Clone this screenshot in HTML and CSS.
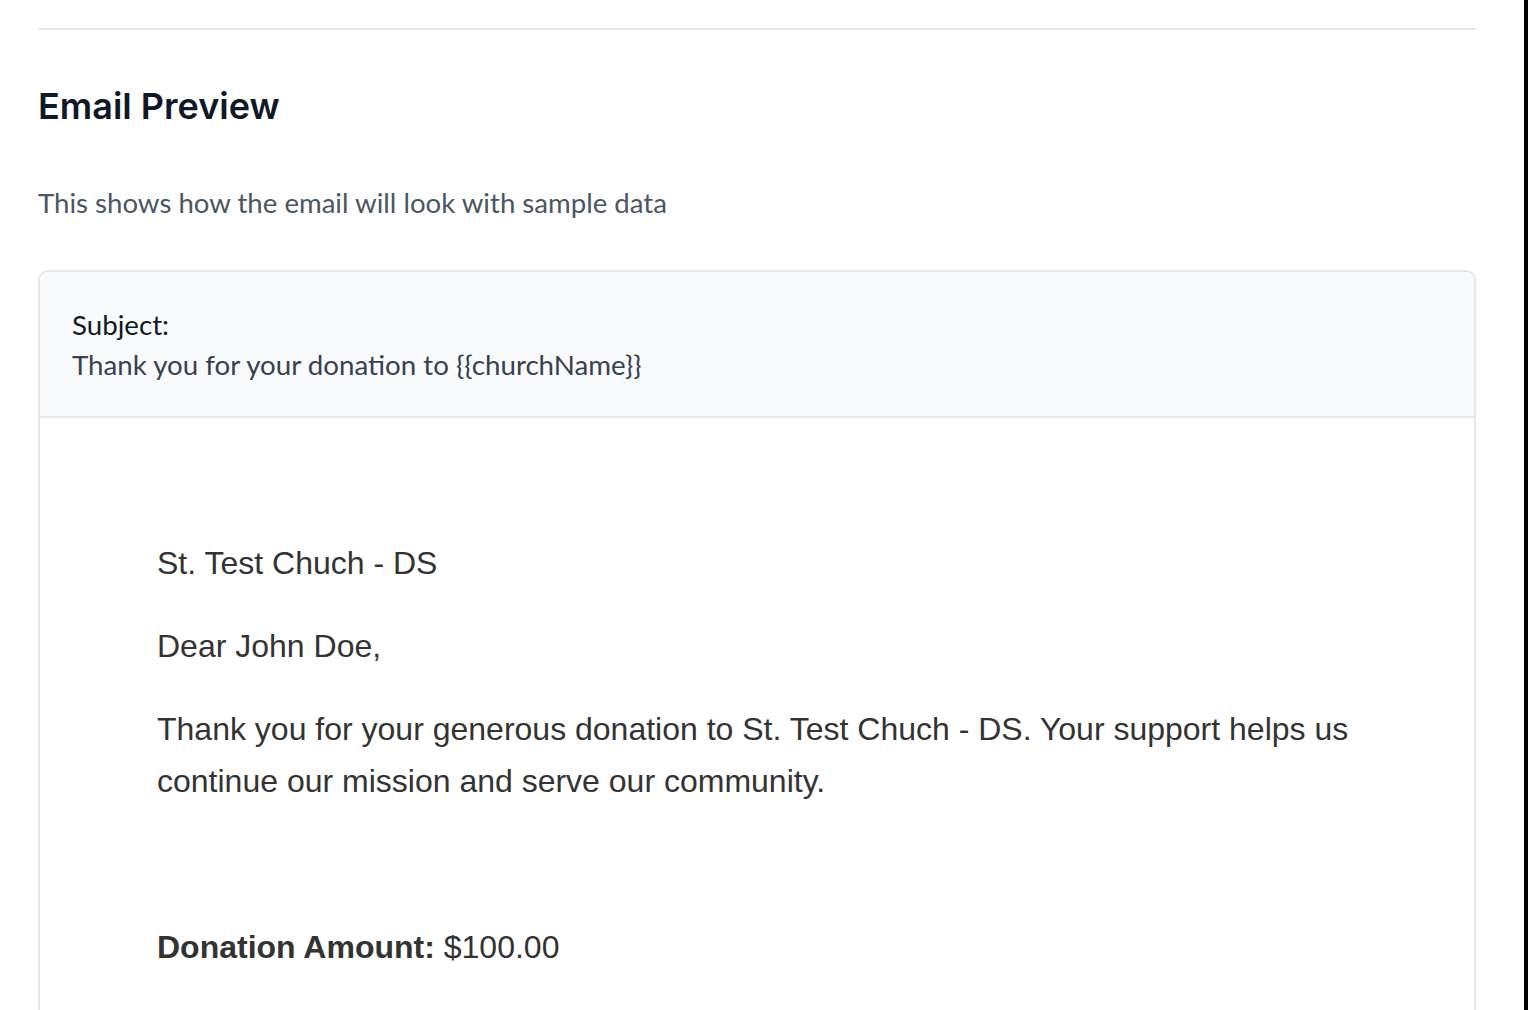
FILE: index.html
```html
<!DOCTYPE html>
<html lang="en">
<head>
<meta charset="utf-8">
<title>Email Preview</title>
<link rel="stylesheet" href="styles.css">
</head>
<body>
<div class="page">
  <main class="main">
    <section class="section">
      <h2 class="title">Email Preview</h2>
      <p class="subtitle">This shows how the email will look with sample data</p>
      <div class="card">
        <div class="card-header">
          <div class="subject-label">Subject:</div>
          <div class="subject-value">Thank you for your donation to {{churchName}}</div>
        </div>
        <div class="card-body">
          <div class="email">
            <p class="email-p">St. Test Chuch - DS</p>
            <p class="email-p">Dear John Doe,</p>
            <p class="email-p">Thank you for your generous donation to St. Test Chuch - DS. Your support helps us continue our mission and serve our community.</p>
            <div class="details">
              <p class="email-p"><strong>Donation Amount:</strong> $100.00</p>
            </div>
          </div>
        </div>
      </div>
    </section>
  </main>
  <div class="edge"></div>
</div>
</body>
</html>
```

FILE: styles.css
```css
html, body {
  margin: 0;
  padding: 0;
  background: #ffffff;
}

.page {
  display: flex;
  min-height: 100vh;
}

.main {
  flex: 1;
  padding: 28px 48px 0 38px;
  min-width: 0;
}

.edge {
  width: 4px;
  background: #000000;
  flex-shrink: 0;
}

.section {
  border-top: 2px solid #e5e7eb;
  padding-top: 56px;
}

.title {
  margin: 0;
  font-family: Inter, "Liberation Sans", sans-serif;
  font-weight: 600;
  font-size: 36px;
  line-height: 40px;
  color: #111827;
}

.subtitle {
  margin: 59px 0 0;
  font-family: Lato, "Liberation Sans", sans-serif;
  font-size: 27.6px;
  line-height: 36px;
  color: #4b5563;
}

.card {
  margin-top: 49px;
  border: 2px solid #e5e7eb;
  border-radius: 10px;
  overflow: hidden;
}

.card-header {
  background: #f9fafb;
  border-bottom: 2px solid #e5e7eb;
  padding: 33px 32px 31px;
  font-family: Lato, "Liberation Sans", sans-serif;
  font-size: 27.7px;
  line-height: 40px;
}

.subject-label {
  color: #111827;
}

.subject-value {
  color: #374151;
}

.card-body {
  background: #ffffff;
  padding: 119px 117px 160px;
}

.email {
  font-family: "Liberation Sans", Arial, sans-serif;
  font-size: 32px;
  line-height: 52px;
  color: #333333;
}

.email-p {
  margin: 0 0 31px;
}

.details {
  margin-top: 114px;
}
```
